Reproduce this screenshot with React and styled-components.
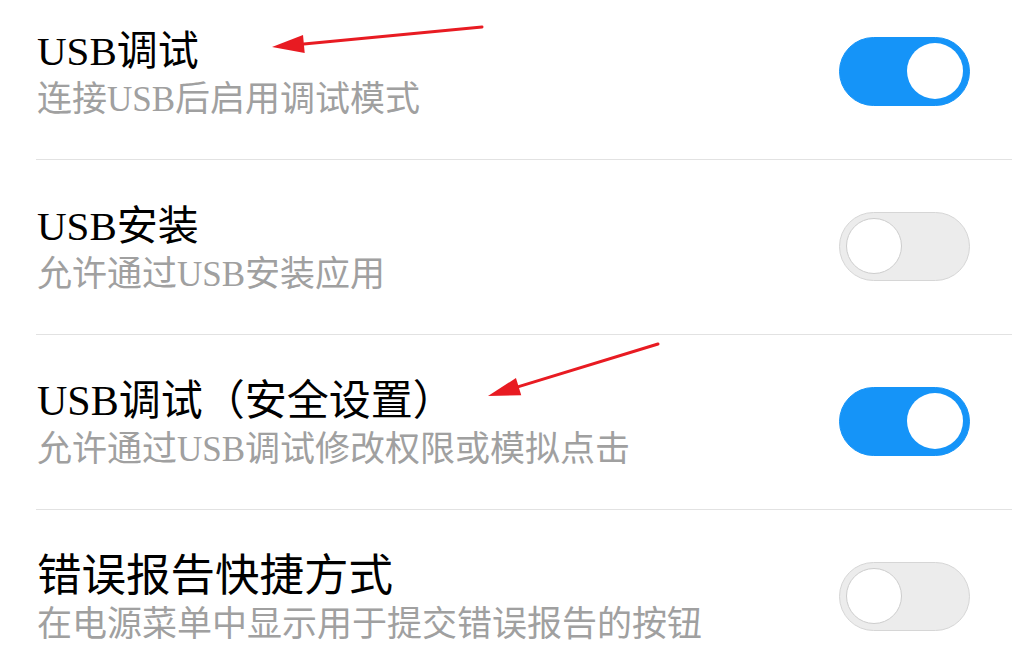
import React from "react";
import styled, { createGlobalStyle } from "styled-components";

const GlobalStyle = createGlobalStyle`
  html, body {
    margin: 0;
    padding: 0;
    background: #ffffff;
    overflow: hidden;
  }
  body {
    font-family: "Liberation Serif", "Noto Sans CJK SC", serif;
  }
`;

const settings = [
  { title: "USB调试", size: 41, desc: "连接USB后启用调试模式", on: true },
  { title: "USB安装", size: 41, desc: "允许通过USB安装应用", on: false },
  { title: "USB调试（安全设置）", size: 42, desc: "允许通过USB调试修改权限或模拟点击", on: true },
  { title: "错误报告快捷方式", size: 44.5, desc: "在电源菜单中显示用于提交错误报告的按钮", on: false },
];

const Arrow = ({ x1, y1, x2, y2 }) => {
  // arrowhead sits at (x2, y2)
  const angle = Math.atan2(y2 - y1, x2 - x1);
  const len = 32;
  const half = 9;
  const bx = x2 - Math.cos(angle) * len;
  const by = y2 - Math.sin(angle) * len;
  const px = -Math.sin(angle) * half;
  const py = Math.cos(angle) * half;
  return (
    <g>
      <line x1={x1} y1={y1} x2={bx} y2={by} stroke="#e81b22" strokeWidth="3" strokeLinecap="round" />
      <polygon
        points={`${x2},${y2} ${bx + px},${by + py} ${bx - px},${by - py}`}
        fill="#e81b22"
      />
    </g>
  );
};

const App = () => (
  <>
    <GlobalStyle />
    <Screen>
      <List>
        {settings.map((item) => (
          <Row key={item.title}>
            <TextBlock>
              <Title size={item.size}>{item.title}</Title>
              <Description>{item.desc}</Description>
            </TextBlock>
            <Toggle on={item.on}>
              <Knob on={item.on} />
            </Toggle>
          </Row>
        ))}
      </List>
      <Annotations viewBox="0 0 1012 672">
        <Arrow x1={482} y1={27} x2={272} y2={47} />
        <Arrow x1={658} y1={344} x2={488} y2={396} />
      </Annotations>
    </Screen>
  </>
);

const Screen = styled.div`
  position: relative;
  width: 1012px;
  height: 672px;
  overflow: hidden;
  background: #ffffff;
`;

const List = styled.div`
  display: flex;
  flex-direction: column;
  margin-top: -15px;
  padding-left: 36px;
`;

const Row = styled.div`
  display: flex;
  align-items: center;
  justify-content: space-between;
  height: 174px;
  padding-right: 42px;
  border-bottom: 1px solid #e2e2e2;
`;

const TextBlock = styled.div`
  display: flex;
  flex-direction: column;
  padding-left: 1px;
  padding-top: 2px;
`;

const Title = styled.div`
  font-size: ${(p) => p.size}px;
  line-height: 50px;
  color: #000000;
`;

const Description = styled.div`
  font-size: 35px;
  line-height: 42px;
  margin-top: 3px;
  color: #a0a0a0;
`;

const Toggle = styled.div`
  box-sizing: border-box;
  display: flex;
  align-items: center;
  justify-content: ${(p) => (p.on ? "flex-end" : "flex-start")};
  width: 131px;
  height: 69px;
  padding: 0 6px;
  border-radius: 35px;
  background: ${(p) => (p.on ? "#1594f8" : "#ececec")};
  border: 1px solid ${(p) => (p.on ? "#1594f8" : "#d6d6d6")};
  margin-top: -2px;
`;

const Knob = styled.div`
  box-sizing: border-box;
  width: 56px;
  height: 56px;
  border-radius: 50%;
  background: #ffffff;
  border: ${(p) => (p.on ? "none" : "1px solid #cdcdcd")};
`;

const Annotations = styled.svg`
  position: absolute;
  left: 0;
  top: 0;
  width: 1012px;
  height: 672px;
  pointer-events: none;
`;

export default App;
